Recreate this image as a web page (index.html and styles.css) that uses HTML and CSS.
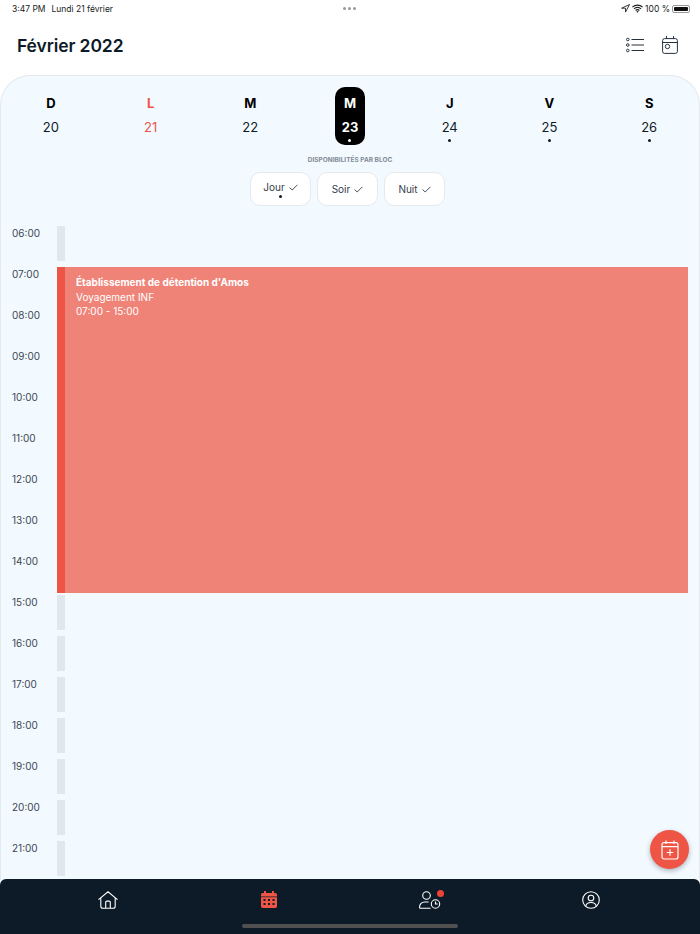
FILE: index.html
```html
<!DOCTYPE html>
<html lang="fr">
<head>
<meta charset="utf-8">
<title>Février 2022</title>
<link rel="stylesheet" href="styles.css">
</head>
<body>
<div class="app">
  <div class="status">
    <span class="status-time">3:47 PM</span>
    <span class="status-date">Lundi 21 février</span>
    <span class="status-dots"><i></i><i></i><i></i></span>
    <span class="status-right">
      <svg width="9" height="9" viewBox="0 0 9 9"><path d="M8.500.5 .6 4.200h3.900v3.900z" fill="none" stroke="#222" stroke-width=".9"/></svg>
      <svg width="11" height="9" viewBox="0 0 11 9"><path d="M.4 3.200a7.200 7.200 0 0 1 10.200 0M2 4.900a4.900 4.900 0 0 1 7 0M3.600 6.500a2.600 2.600 0 0 1 3.800 0" fill="none" stroke="#222" stroke-width="1.150"/><path d="M5.500 8.800 4.300 7.500a1.700 1.700 0 0 1 2.400 0z" fill="#222"/></svg>
      <span class="status-pct">100 %</span>
      <span class="battery"><span class="battery-fill"></span></span>
    </span>
  </div>
  <header class="header">
    <h1 class="title">Février 2022</h1>
    <div class="header-icons">
      <svg width="18" height="16" viewBox="0 0 18 16" fill="none" stroke="#25323e" stroke-width="1">
        <circle cx="1.800" cy="2.500" r="1.300"/><circle cx="1.800" cy="8" r="1.300"/><circle cx="1.800" cy="13.500" r="1.300"/>
        <path d="M5.500 2.500H18M5.500 8H18M5.500 13.500H18"/>
      </svg>
      <svg width="16" height="18" viewBox="0 0 16 18" fill="none" stroke="#25323e" stroke-width="1">
        <rect x=".6" y="2.600" width="14.800" height="14.800" rx="2"/>
        <path d="M.6 6.500h14.800M4.500 0v3M11.500 0v3"/>
        <circle cx="5.500" cy="10.500" r="2.200"/>
      </svg>
    </div>
  </header>
  <main class="panel">
    <div class="week">
      <div class="day"><b>D</b><span>20</span></div>
      <div class="day day-today"><b>L</b><span>21</span></div>
      <div class="day"><b>M</b><span>22</span></div>
      <div class="day day-selected"><b>M</b><span>23</span><i class="dot"></i></div>
      <div class="day"><b>J</b><span>24</span><i class="dot"></i></div>
      <div class="day"><b>V</b><span>25</span><i class="dot"></i></div>
      <div class="day"><b>S</b><span>26</span><i class="dot"></i></div>
    </div>
    <div class="blocks">
      <div class="blocks-label">DISPONIBILITÉS PAR BLOC</div>
      <div class="blocks-row">
        <div class="block block-marked">
          <span class="block-text">Jour <svg class="check" width="9" height="7" viewBox="0 0 9 7"><path d="M.6 3.600 3.200 6 8.400.8" fill="none" stroke="#33404b" stroke-width=".9"/></svg></span>
          <i class="dot"></i>
        </div>
        <div class="block">
          <span class="block-text">Soir <svg class="check" width="9" height="7" viewBox="0 0 9 7"><path d="M.6 3.600 3.200 6 8.400.8" fill="none" stroke="#33404b" stroke-width=".9"/></svg></span>
        </div>
        <div class="block">
          <span class="block-text">Nuit <svg class="check" width="9" height="7" viewBox="0 0 9 7"><path d="M.6 3.600 3.200 6 8.400.8" fill="none" stroke="#33404b" stroke-width=".9"/></svg></span>
        </div>
      </div>
    </div>
    <div class="timeline">
      <div class="hour h1">06:00</div><div class="slot h1"></div>
      <div class="hour h2">07:00</div>
      <div class="hour h3">08:00</div>
      <div class="hour h4">09:00</div>
      <div class="hour h5">10:00</div>
      <div class="hour h6">11:00</div>
      <div class="hour h7">12:00</div>
      <div class="hour h8">13:00</div>
      <div class="hour h9">14:00</div>
      <article class="event">
        <div class="event-title">Établissement de détention d'Amos</div>
        <div class="event-line">Voyagement INF</div>
        <div class="event-line">07:00 - 15:00</div>
      </article>
      <div class="hour h10">15:00</div><div class="slot h10"></div>
      <div class="hour h11">16:00</div><div class="slot h11"></div>
      <div class="hour h12">17:00</div><div class="slot h12"></div>
      <div class="hour h13">18:00</div><div class="slot h13"></div>
      <div class="hour h14">19:00</div><div class="slot h14"></div>
      <div class="hour h15">20:00</div><div class="slot h15"></div>
      <div class="hour h16">21:00</div><div class="slot h16"></div>
    </div>
  </main>
  <div class="fab">
    <svg width="18" height="20" viewBox="0 0 18 20" fill="none" stroke="#fff" stroke-width="1.200">
      <rect x="1" y="2.600" width="16" height="16.400" rx="2"/>
      <path d="M1 6.600h16M5 .4v3.400M13 .4v3.400M9 9.200v6.600M5.700 12.500h6.600"/>
    </svg>
  </div>
  <nav class="nav">
    <div class="nav-item">
      <svg width="20" height="18" viewBox="0 0 20 18" fill="none" stroke="#fff" stroke-width="1.100">
        <path d="M.5 8.600 10 .8l9.500 7.800M2.800 7v8.300a2 2 0 0 0 2 2h10.400a2 2 0 0 0 2-2V7M7.700 17.300v-6a1.200 1.200 0 0 1 1.200-1.200h2.200a1.200 1.200 0 0 1 1.200 1.200v6"/>
      </svg>
    </div>
    <div class="nav-item">
      <svg width="16" height="17" viewBox="0 0 16 17">
        <path fill="#ee5544" d="M3 0h2v2h6V0h2v2h1.300A1.700 1.700 0 0 1 16 3.700V5.500H0V3.700A1.700 1.700 0 0 1 1.700 2H3z"/>
        <path fill="#ee5544" fill-rule="evenodd" d="M0 6.300h16v9a1.700 1.700 0 0 1-1.700 1.700H1.700A1.700 1.700 0 0 1 0 15.300zM2.500 8v2h2V8zm4.500 0v2h2V8zm4.500 0v2h2V8zM2.500 12v2h2v-2zm4.500 0v2h2v-2zm4.500 0v2h2v-2z"/>
      </svg>
    </div>
    <div class="nav-item nav-alert">
      <svg width="22" height="18" viewBox="0 0 22 18" fill="none" stroke="#fff" stroke-width="1.100">
        <circle cx="7.500" cy="4.500" r="3.800"/>
        <path d="M.6 17.300v-1.300a5 5 0 0 1 5-5h4M.6 17.300h11"/>
        <circle cx="16.500" cy="13" r="4.200" fill="#0d1b28"/>
        <path d="M16.500 10.500V13h2.200"/>
      </svg>
      <span class="badge"></span>
    </div>
    <div class="nav-item">
      <svg width="18" height="18" viewBox="0 0 18 18" fill="none" stroke="#fff" stroke-width="1.100">
        <circle cx="9" cy="9" r="8.300"/>
        <circle cx="9" cy="7" r="2.800"/>
        <path d="M3.600 15.300c.6-2.600 2.800-3.800 5.400-3.800s4.800 1.200 5.400 3.800"/>
      </svg>
    </div>
    <span class="home-bar"></span>
  </nav>
</div>
</body>
</html>
```

FILE: styles.css
```css
* { box-sizing: border-box; }
html, body { margin: 0; padding: 0; }
body {
  width: 700px;
  height: 934px;
  overflow: hidden;
  background: #fff;
  font-family: Inter, "Liberation Sans", sans-serif;
  color: #0d1b28;
}
.app {
  position: relative;
  width: 700px;
  height: 934px;
  display: flex;
  flex-direction: column;
  overflow: hidden;
}
.status {
  height: 17px;
  flex: none;
  display: flex;
  align-items: center;
  padding: 0 10px 0 12px;
  font-size: 8.500px;
  color: #222;
  position: relative;
}
.status-date { margin-left: 6px; }
.status-dots {
  position: absolute;
  left: 343px;
  top: 7px;
  display: flex;
  gap: 2px;
}
.status-dots i {
  width: 3px;
  height: 3px;
  border-radius: 50%;
  background: #999;
}
.status-right {
  margin-left: auto;
  display: flex;
  align-items: center;
  gap: 2px;
  font-size: 8.500px;
}
.battery {
  width: 18px;
  height: 8px;
  display: block;
  border: 1px solid #999;
  border-radius: 2px;
  padding: 1px;
}
.battery-fill {
  display: block;
  height: 100%;
  background: #111;
  border-radius: 1px;
}
.header {
  height: 58px;
  flex: none;
  display: flex;
  align-items: center;
  justify-content: space-between;
  padding: 0 22.500px 1px 17px;
}
.title {
  margin: 0;
  font-size: 17.500px;
  font-weight: 600;
  letter-spacing: -.1px;
}
.header-icons {
  display: flex;
  align-items: center;
  gap: 18px;
  margin-top: -2px;
}
.panel {
  flex: 1;
  min-height: 0;
  background: #f2f9ff;
  border: 1px solid #e4e9ee;
  border-bottom: 0;
  border-radius: 30px 30px 0 0;
  padding-top: 11px;
}
.week {
  display: grid;
  grid-template-columns: repeat(7, 1fr);
}
.day {
  justify-self: center;
  width: 30px;
  height: 58px;
  border-radius: 10px;
  display: flex;
  flex-direction: column;
  align-items: center;
  position: relative;
  padding-top: 8px;
  color: #0d1b28;
}
.day b {
  font-size: 13px;
  line-height: 16px;
  font-weight: 700;
  color: #000;
}
.day span {
  font-size: 13px;
  line-height: 16px;
  margin-top: 8px;
}
.dot {
  display: block;
  width: 3px;
  height: 3px;
  border-radius: 50%;
  background: #0d1b28;
}
.day .dot { margin-top: 3.500px; }
.day-today b, .day-today span { color: #ee5544; }
.day-selected { background: #000; color: #fff; }
.day-selected b { color: #fff; }
.day-selected span { font-weight: 700; }
.day-selected .dot { background: #fff; }
.blocks {
  margin-top: 11px;
  display: flex;
  flex-direction: column;
  align-items: center;
}
.blocks-label {
  font-size: 6.500px;
  line-height: 9px;
  font-weight: 700;
  color: #828b95;
}
.blocks-row {
  margin-top: 7px;
  margin-right: 5px;
  display: flex;
  gap: 6px;
}
.block {
  width: 61px;
  height: 34px;
  background: #fff;
  border: 1px solid #e4e9ee;
  border-radius: 10px;
  display: flex;
  flex-direction: column;
  align-items: center;
  justify-content: center;
  font-size: 10px;
  color: #33404b;
}
.block-text {
  display: flex;
  align-items: center;
  gap: 4px;
  line-height: 14px;
}
.block-marked { justify-content: flex-start; padding-top: 7px; }
.block-marked .dot { margin-top: 1px; }
.timeline {
  margin-top: 20px;
  display: grid;
  grid-template-columns: 56px 631px;
  grid-auto-rows: 41px;
}
.hour {
  grid-column: 1;
  font-size: 10px;
  line-height: 14px;
  padding: 0 0 0 11px;
  color: #3c4853;
}
.slot {
  grid-column: 2;
  width: 8px;
  height: 35px;
  background: #e0e7ee;
}
.h1 { grid-row: 1; }
.h2 { grid-row: 2; }
.h3 { grid-row: 3; }
.h4 { grid-row: 4; }
.h5 { grid-row: 5; }
.h6 { grid-row: 6; }
.h7 { grid-row: 7; }
.h8 { grid-row: 8; }
.h9 { grid-row: 9; }
.h10 { grid-row: 10; }
.h11 { grid-row: 11; }
.h12 { grid-row: 12; }
.h13 { grid-row: 13; }
.h14 { grid-row: 14; }
.h15 { grid-row: 15; }
.h16 { grid-row: 16; }
.event {
  grid-column: 2;
  grid-row: 2 / span 8;
  height: 326px;
  background: #ef8378;
  border-left: 8px solid #ee5544;
  padding: 8px 11px;
  color: #fff;
  font-size: 10px;
  line-height: 14px;
}
.event-title { font-weight: 700; margin-bottom: 1px; }
.fab {
  position: absolute;
  left: 650px;
  top: 830px;
  width: 39px;
  height: 39px;
  border-radius: 50%;
  background: #ee5544;
  box-shadow: 0 2px 5px rgba(13, 27, 40, .3);
  display: flex;
  align-items: center;
  justify-content: center;
  z-index: 2;
}
.nav {
  position: relative;
  flex: none;
  height: 55px;
  margin-top: -1px;
  background: #0d1b28;
  border-radius: 6px 6px 0 0;
  display: grid;
  grid-template-columns: repeat(4, 161px);
  padding: 12px 27px 0 27.500px;
  align-items: start;
}
.nav-item {
  display: flex;
  justify-content: center;
  position: relative;
}
.badge {
  position: absolute;
  left: 87px;
  top: -1px;
  width: 7px;
  height: 7px;
  border-radius: 50%;
  background: #ee4436;
}
.home-bar {
  position: absolute;
  left: 242px;
  top: 45px;
  width: 216px;
  height: 4px;
  border-radius: 2px;
  background: #505050;
}
```
